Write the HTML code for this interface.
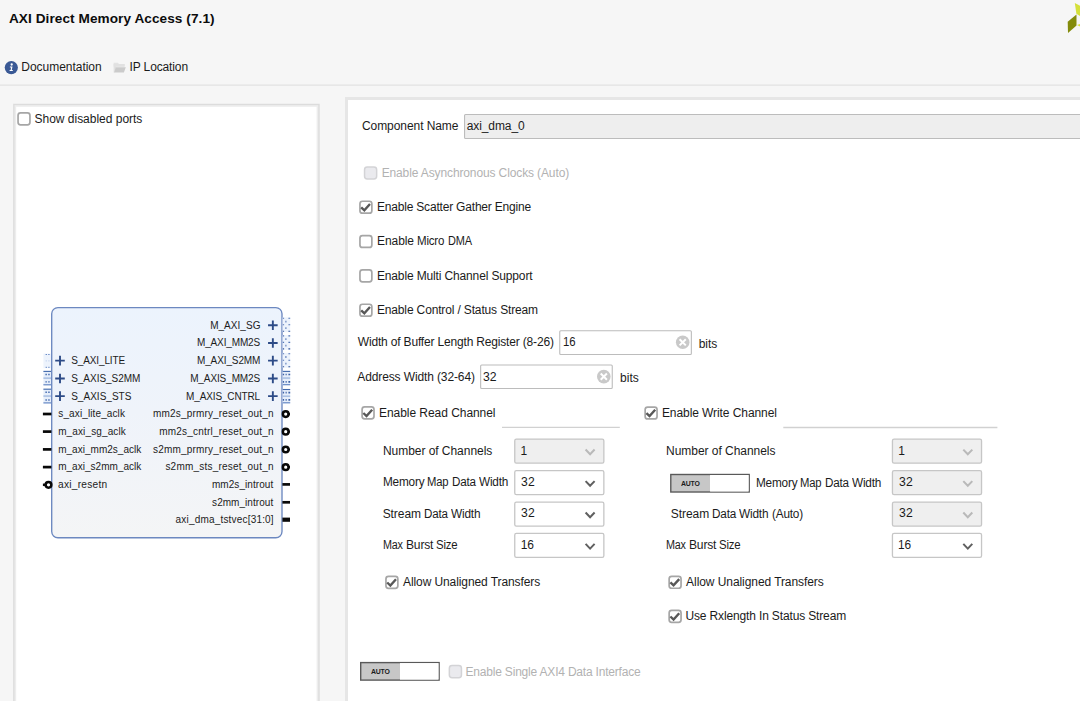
<!DOCTYPE html>
<html>
<head>
<meta charset="utf-8">
<title>AXI Direct Memory Access (7.1)</title>
<style>
html,body{margin:0;padding:0;}
body{width:1080px;height:701px;overflow:hidden;background:#f6f6f6;font-family:"Liberation Sans",sans-serif;font-size:12px;color:#1b1b1b;position:relative;}
.abs{position:absolute;}
.t{position:absolute;white-space:nowrap;transform-origin:0 0;}
.sep{position:absolute;left:0;top:84.6px;width:1080px;height:1.2px;background:#e3e3e3;}
.panel{position:absolute;background:#fff;border:3px solid #e1e1e1;box-sizing:border-box;}
.cb{position:absolute;width:13.2px;height:13.2px;box-sizing:border-box;border:1.6px solid #979797;border-radius:3.4px;background:#fff;}
.cb.dis{border-color:#d2d2d2;background:#ebebee;}
.cb svg{position:absolute;left:-1.5px;top:-1.5px;width:13.2px;height:13.2px;}
.field{position:absolute;box-sizing:border-box;border:1.2px solid #c6c6c6;background:#fff;}
.field.ro{background:#eeeeee;border-color:#c2c2c2;}
.sel{position:absolute;box-sizing:border-box;border:1.3px solid #cdcdcd;border-radius:1.5px;background:#fff;}
.sel.ro{background:#efefef;}
.hl{position:absolute;height:1.2px;background:#d2d2d2;}
.tog{position:absolute;box-sizing:border-box;width:80px;height:19.2px;border:1.4px solid #585858;background:#fff;}
.tog i{position:absolute;left:0;top:0;width:38.4px;height:16.4px;background:#c9c9c9;}
</style>
</head>
<body>
<svg class="abs" style="left:0;top:0;width:1080px;height:701px" viewBox="0 0 1080 701"><path d="M0 85.1H1080" stroke="#e2e2e2" stroke-width="1.3"/><rect x="14.70" y="105.30" width="303.40" height="613.20" fill="#ffffff" stroke="#ededed" stroke-width="3.0"/><rect x="13.85" y="104.45" width="305.10" height="614.90" fill="none" stroke="#dcdcdc" stroke-width="1.3"/><rect x="18.05" y="112.95" width="11.90" height="11.90" rx="2.5" fill="#ffffff" stroke="#a6a6a6" stroke-width="1.7"/><rect x="346.50" y="98.50" width="752.00" height="620.00" fill="#ffffff" stroke="#e6e6e6" stroke-width="3.0"/><rect x="464.55" y="114.55" width="634.90" height="23.95" rx="1.0" fill="#eeeeee" stroke="#bcbcbc" stroke-width="1.1"/><rect x="364.55" y="166.95" width="12.10" height="12.10" rx="2.7" fill="#eaeaee" stroke="#d3d3d6" stroke-width="1.5"/><rect x="359.95" y="201.25" width="11.90" height="11.90" rx="2.5" fill="#ffffff" stroke="#a6a6a6" stroke-width="1.7"/><path d="M361.20 207.30L364.35 210.30L370.00 204.00" fill="none" stroke="#585858" stroke-width="2.4"/><rect x="359.95" y="235.55" width="11.90" height="11.90" rx="2.5" fill="#ffffff" stroke="#a6a6a6" stroke-width="1.7"/><rect x="359.95" y="269.95" width="11.90" height="11.90" rx="2.5" fill="#ffffff" stroke="#a6a6a6" stroke-width="1.7"/><rect x="359.95" y="304.25" width="11.90" height="11.90" rx="2.5" fill="#ffffff" stroke="#a6a6a6" stroke-width="1.7"/><path d="M361.20 310.30L364.35 313.30L370.00 307.00" fill="none" stroke="#585858" stroke-width="2.4"/><rect x="559.75" y="330.75" width="131.60" height="23.70" rx="1.0" fill="#ffffff" stroke="#bcbcbc" stroke-width="1.1"/><circle cx="682.7" cy="342.3" r="6.8" fill="#c9c9c9"/><path d="M679.6 339.2L685.8000000000001 345.40000000000003M685.8000000000001 339.2L679.6 345.40000000000003" stroke="#fff" stroke-width="2"/><rect x="480.65" y="365.05" width="131.60" height="23.40" rx="1.0" fill="#ffffff" stroke="#bcbcbc" stroke-width="1.1"/><circle cx="603.8" cy="376.6" r="6.8" fill="#c9c9c9"/><path d="M600.6999999999999 373.5L606.9 379.70000000000005M606.9 373.5L600.6999999999999 379.70000000000005" stroke="#fff" stroke-width="2"/><rect x="362.10" y="406.95" width="11.90" height="11.90" rx="2.5" fill="#ffffff" stroke="#a6a6a6" stroke-width="1.7"/><path d="M363.35 413.00L366.50 416.00L372.15 409.70" fill="none" stroke="#585858" stroke-width="2.4"/><path d="M502 427.4H619.8" stroke="#d1d1d1" stroke-width="1.3"/><rect x="514.75" y="439.05" width="89.10" height="24.00" rx="1.6" fill="#efefef" stroke="#c6c6c6" stroke-width="1.3"/><path d="M585.60 449.50L590.10 454.20L594.60 449.50" fill="none" stroke="#b9b9b9" stroke-width="2"/><rect x="514.75" y="470.65" width="89.10" height="24.00" rx="1.6" fill="#ffffff" stroke="#c6c6c6" stroke-width="1.3"/><path d="M585.60 481.10L590.10 485.80L594.60 481.10" fill="none" stroke="#606060" stroke-width="2"/><rect x="514.75" y="502.05" width="89.10" height="24.00" rx="1.6" fill="#ffffff" stroke="#c6c6c6" stroke-width="1.3"/><path d="M585.60 512.50L590.10 517.20L594.60 512.50" fill="none" stroke="#606060" stroke-width="2"/><rect x="514.75" y="533.45" width="89.10" height="24.00" rx="1.6" fill="#ffffff" stroke="#c6c6c6" stroke-width="1.3"/><path d="M585.60 543.90L590.10 548.60L594.60 543.90" fill="none" stroke="#606060" stroke-width="2"/><rect x="385.95" y="576.45" width="11.90" height="11.90" rx="2.5" fill="#ffffff" stroke="#a6a6a6" stroke-width="1.7"/><path d="M387.20 582.50L390.35 585.50L396.00 579.20" fill="none" stroke="#585858" stroke-width="2.4"/><rect x="645.15" y="407.05" width="11.90" height="11.90" rx="2.5" fill="#ffffff" stroke="#a6a6a6" stroke-width="1.7"/><path d="M646.40 413.10L649.55 416.10L655.20 409.80" fill="none" stroke="#585858" stroke-width="2.4"/><path d="M783.3 427.5H997.4" stroke="#d1d1d1" stroke-width="1.3"/><rect x="892.45" y="439.15" width="89.10" height="24.00" rx="1.6" fill="#efefef" stroke="#c6c6c6" stroke-width="1.3"/><path d="M963.30 449.60L967.80 454.30L972.30 449.60" fill="none" stroke="#b9b9b9" stroke-width="2"/><rect x="671.10" y="474.80" width="39.00" height="17.00" fill="#c7c7c7"/><rect x="670.80" y="474.50" width="78.40" height="17.50" fill="none" stroke="#595959" stroke-width="1.4"/><rect x="710.10" y="475.00" width="38.50" height="16.50" fill="#ffffff"/><rect x="892.45" y="470.65" width="89.10" height="24.00" rx="1.6" fill="#efefef" stroke="#c6c6c6" stroke-width="1.3"/><path d="M963.30 481.10L967.80 485.80L972.30 481.10" fill="none" stroke="#b9b9b9" stroke-width="2"/><rect x="892.45" y="502.05" width="89.10" height="24.00" rx="1.6" fill="#efefef" stroke="#c6c6c6" stroke-width="1.3"/><path d="M963.30 512.50L967.80 517.20L972.30 512.50" fill="none" stroke="#b9b9b9" stroke-width="2"/><rect x="892.45" y="533.45" width="89.10" height="24.00" rx="1.6" fill="#ffffff" stroke="#c6c6c6" stroke-width="1.3"/><path d="M963.30 543.90L967.80 548.60L972.30 543.90" fill="none" stroke="#606060" stroke-width="2"/><rect x="669.15" y="576.35" width="11.90" height="11.90" rx="2.5" fill="#ffffff" stroke="#a6a6a6" stroke-width="1.7"/><path d="M670.40 582.40L673.55 585.40L679.20 579.10" fill="none" stroke="#585858" stroke-width="2.4"/><rect x="669.15" y="610.45" width="11.90" height="11.90" rx="2.5" fill="#ffffff" stroke="#a6a6a6" stroke-width="1.7"/><path d="M670.40 616.50L673.55 619.50L679.20 613.20" fill="none" stroke="#585858" stroke-width="2.4"/><rect x="361.00" y="662.90" width="39.00" height="17.00" fill="#c7c7c7"/><rect x="360.70" y="662.60" width="78.40" height="17.50" fill="none" stroke="#595959" stroke-width="1.4"/><rect x="400.00" y="663.10" width="38.50" height="16.50" fill="#ffffff"/><rect x="449.35" y="665.55" width="12.10" height="12.10" rx="2.7" fill="#eaeaee" stroke="#d3d3d6" stroke-width="1.5"/></svg>
<div class="t" style="left:8.91px;top:11px;line-height:16px;height:16px;letter-spacing:0.075px;font-size:13.6px;font-weight:bold;color:#0c0c0c;">AXI Direct Memory Access (7.1)</div>
<svg class="abs" style="left:1060px;top:0;width:20px;height:40px" viewBox="0 0 20 40">
<polygon points="7.7,21.8 16.5,14.6 16.5,25.4 8,33.0" fill="#838b0b"/>
<polygon points="14.8,3.1 20,5.7 20,16 16.4,13.8" fill="#d5e03a"/>
<polygon points="17,25 20,23.9 20,26.6" fill="#d5e03a"/></svg>
<svg class="abs" style="left:4px;top:60px;width:15px;height:15px" viewBox="0 0 15 15">
<circle cx="7.3" cy="7.6" r="6.6" fill="#3a5995"/>
<circle cx="7.7" cy="4.5" r="1.15" fill="#fff"/>
<path d="M5.9 6.4h2.6l-0.7 3.6h1v1H5.6v-1h1l0.5-2.6H5.9z" fill="#fff"/></svg>
<div class="t" style="left:21.34px;top:60px;line-height:14px;height:14px;letter-spacing:-0.031px;">Documentation</div>
<svg class="abs" style="left:112px;top:61px;width:16px;height:13px" viewBox="0 0 16 13">
<path d="M1.6 1.7h4.4l0.9 1.2h5.7v2.6H1.6z" fill="#e3e3e3"/>
<path d="M1.6 3v8.4h1.2l1.3-5.6h8.5V3z" fill="#e1e1e1"/>
<path d="M3.7 6.2h10.1l-1.9 5.3H2.2z" fill="#cbcbcb"/></svg>
<div class="t" style="left:129.51px;top:60px;line-height:14px;height:14px;letter-spacing:-0.124px;">IP Location</div>
<div class="t" style="left:34.54px;top:112px;line-height:14px;height:14px;letter-spacing:-0.013px;">Show disabled ports</div>
<svg class="abs" style="left:0;top:0;width:340px;height:701px" viewBox="0 0 340 701"><defs><linearGradient id="bg1" x1="0" y1="0" x2="0" y2="1"><stop offset="0" stop-color="#ecf3fd"/><stop offset="0.45" stop-color="#eff3fa"/><stop offset="1" stop-color="#f4f5f6"/></linearGradient></defs><rect x="51.7" y="307.55" width="230.3" height="230.2" rx="6.2" ry="6.2" fill="url(#bg1)" stroke="#6c88c0" stroke-width="1.35"/><rect x="43.4" y="353.6" width="7.6" height="14.599999999999966" fill="#edf3fc"/><path d="M45.6 354.5h1.4M48.199999999999996 354.5h1.4" stroke="#6a8bc6" stroke-width="1"/><path d="M45.6 360.9h1.4M48.199999999999996 360.9h1.4" stroke="#c3d3ee" stroke-width="1"/><path d="M45.6 367.29999999999995h1.4M48.199999999999996 367.29999999999995h1.4" stroke="#6a8bc6" stroke-width="1"/><rect x="43.4" y="370.9" width="7.6" height="14.400000000000034" fill="#e6eefa"/><path d="M43.4 371.4h7.6" stroke="#4168ab" stroke-width="1.1"/><path d="M43.4 378.1h7.6" stroke="#8fabd9" stroke-width="1.1"/><path d="M43.4 384.8h7.6" stroke="#5c80c0" stroke-width="1.1"/><path d="M45.4 374.5h1.5M48.199999999999996 374.5h1.5" stroke="#4a6fb2" stroke-width="1.4"/><path d="M45.4 381.90000000000003h1.5M48.199999999999996 381.90000000000003h1.5" stroke="#4a6fb2" stroke-width="1.4"/><rect x="43.4" y="388.7" width="7.6" height="14.699999999999989" fill="#e6eefa"/><path d="M43.4 389.2h7.6" stroke="#4168ab" stroke-width="1.1"/><path d="M43.4 396.04999999999995h7.6" stroke="#8fabd9" stroke-width="1.1"/><path d="M43.4 402.9h7.6" stroke="#5c80c0" stroke-width="1.1"/><path d="M45.4 392.3h1.5M48.199999999999996 392.3h1.5" stroke="#4a6fb2" stroke-width="1.4"/><path d="M45.4 400.0h1.5M48.199999999999996 400.0h1.5" stroke="#4a6fb2" stroke-width="1.4"/><rect x="282.6" y="317.4" width="7.6" height="14.800000000000011" fill="#edf3fc"/><path d="M282.8 318.29999999999995h1.3M288.40000000000003 318.29999999999995h1.8" stroke="#5577b6" stroke-width="1.1"/><path d="M285.90000000000003 320.65v1.8" stroke="#5b7cba" stroke-width="1.1"/><path d="M282.8 324.79999999999995h1.3M288.40000000000003 324.79999999999995h1.8" stroke="#5577b6" stroke-width="1.1"/><path d="M285.90000000000003 327.15v1.8" stroke="#5b7cba" stroke-width="1.1"/><path d="M282.8 331.29999999999995h1.3M288.40000000000003 331.29999999999995h1.8" stroke="#34589d" stroke-width="1.1"/><rect x="282.6" y="335.0" width="7.6" height="14.800000000000011" fill="#edf3fc"/><path d="M282.8 335.9h1.3M288.40000000000003 335.9h1.8" stroke="#5577b6" stroke-width="1.1"/><path d="M285.90000000000003 338.25v1.8" stroke="#5b7cba" stroke-width="1.1"/><path d="M282.8 342.4h1.3M288.40000000000003 342.4h1.8" stroke="#5577b6" stroke-width="1.1"/><path d="M285.90000000000003 344.75v1.8" stroke="#5b7cba" stroke-width="1.1"/><path d="M282.8 348.9h1.3M288.40000000000003 348.9h1.8" stroke="#34589d" stroke-width="1.1"/><rect x="282.6" y="352.8" width="7.6" height="14.899999999999977" fill="#edf3fc"/><path d="M282.8 353.7h1.3M288.40000000000003 353.7h1.8" stroke="#5577b6" stroke-width="1.1"/><path d="M285.90000000000003 356.075v1.8" stroke="#5b7cba" stroke-width="1.1"/><path d="M282.8 360.25h1.3M288.40000000000003 360.25h1.8" stroke="#5577b6" stroke-width="1.1"/><path d="M285.90000000000003 362.625v1.8" stroke="#5b7cba" stroke-width="1.1"/><path d="M282.8 366.79999999999995h1.3M288.40000000000003 366.79999999999995h1.8" stroke="#34589d" stroke-width="1.1"/><rect x="282.6" y="370.9" width="7.6" height="14.300000000000011" fill="#e6eefa"/><path d="M282.6 371.4h7.6" stroke="#4168ab" stroke-width="1.1"/><path d="M282.6 378.04999999999995h7.6" stroke="#8fabd9" stroke-width="1.1"/><path d="M282.6 384.7h7.6" stroke="#5c80c0" stroke-width="1.1"/><path d="M282.8 374.5h1.3M285.6 374.5h1.1M288.40000000000003 374.5h1.8" stroke="#3c62a6" stroke-width="1.7"/><path d="M282.8 381.8h1.3M285.6 381.8h1.1M288.40000000000003 381.8h1.8" stroke="#3c62a6" stroke-width="1.7"/><rect x="282.6" y="389.0" width="7.6" height="14.300000000000011" fill="#e6eefa"/><path d="M282.6 389.5h7.6" stroke="#4168ab" stroke-width="1.1"/><path d="M282.6 396.15h7.6" stroke="#8fabd9" stroke-width="1.1"/><path d="M282.6 402.8h7.6" stroke="#5c80c0" stroke-width="1.1"/><path d="M282.8 392.6h1.3M285.6 392.6h1.1M288.40000000000003 392.6h1.8" stroke="#3c62a6" stroke-width="1.7"/><path d="M282.8 399.90000000000003h1.3M285.6 399.90000000000003h1.1M288.40000000000003 399.90000000000003h1.8" stroke="#3c62a6" stroke-width="1.7"/><path d="M55.2 360.6H64.8M60 355.8V365.40000000000003" stroke="#2d4b87" stroke-width="1.9" fill="none"/><path d="M55.2 378.5H64.8M60 373.7V383.3" stroke="#2d4b87" stroke-width="1.9" fill="none"/><path d="M55.2 396.1H64.8M60 391.3V400.90000000000003" stroke="#2d4b87" stroke-width="1.9" fill="none"/><path d="M268.05 325.25H277.65000000000003M272.85 320.45V330.05" stroke="#2d4b87" stroke-width="1.9" fill="none"/><path d="M268.05 343.0H277.65000000000003M272.85 338.2V347.8" stroke="#2d4b87" stroke-width="1.9" fill="none"/><path d="M268.05 360.6H277.65000000000003M272.85 355.8V365.40000000000003" stroke="#2d4b87" stroke-width="1.9" fill="none"/><path d="M268.05 378.5H277.65000000000003M272.85 373.7V383.3" stroke="#2d4b87" stroke-width="1.9" fill="none"/><path d="M268.05 396.15H277.65000000000003M272.85 391.34999999999997V400.95" stroke="#2d4b87" stroke-width="1.9" fill="none"/><path d="M42.9 414H51.4" stroke="#080808" stroke-width="2.7"/><path d="M42.9 431.6H51.4" stroke="#080808" stroke-width="2.7"/><path d="M42.9 449.4H51.4" stroke="#080808" stroke-width="2.7"/><path d="M42.9 467.1H51.4" stroke="#080808" stroke-width="2.7"/><path d="M42.9 484.8H45" stroke="#0a0a0a" stroke-width="2.5"/><circle cx="48.5" cy="484.8" r="2.85" fill="#fff" stroke="#080808" stroke-width="2.5"/><circle cx="285.7" cy="414.1" r="2.85" fill="#fff" stroke="#080808" stroke-width="2.5"/><path d="M288.6 414.1H290" stroke="#080808" stroke-width="2.2"/><circle cx="285.7" cy="431.7" r="2.85" fill="#fff" stroke="#080808" stroke-width="2.5"/><path d="M288.6 431.7H290" stroke="#080808" stroke-width="2.2"/><circle cx="285.7" cy="449.5" r="2.85" fill="#fff" stroke="#080808" stroke-width="2.5"/><path d="M288.6 449.5H290" stroke="#080808" stroke-width="2.2"/><circle cx="285.7" cy="467.2" r="2.85" fill="#fff" stroke="#080808" stroke-width="2.5"/><path d="M288.6 467.2H290" stroke="#080808" stroke-width="2.2"/><path d="M282.4 484.4H290" stroke="#0a0a0a" stroke-width="2.7"/><path d="M282.4 502.3H290" stroke="#0a0a0a" stroke-width="2.7"/><path d="M282.4 519.7H290" stroke="#0a0a0a" stroke-width="4.2"/></svg>
<div class="t" style="left:71.18px;top:355px;line-height:12px;height:12px;letter-spacing:-0.111px;font-size:10px;color:#1c1c1c;">S_AXI_LITE</div>
<div class="t" style="left:71.18px;top:373px;line-height:12px;height:12px;letter-spacing:-0.022px;font-size:10px;color:#1c1c1c;">S_AXIS_S2MM</div>
<div class="t" style="left:71.18px;top:391px;line-height:12px;height:12px;letter-spacing:0.024px;font-size:10px;color:#1c1c1c;">S_AXIS_STS</div>
<div class="t" style="left:58.30px;top:408px;line-height:12px;height:12px;letter-spacing:0.114px;font-size:10px;color:#1c1c1c;">s_axi_lite_aclk</div>
<div class="t" style="left:58.17px;top:426px;line-height:12px;height:12px;letter-spacing:0.127px;font-size:10px;color:#1c1c1c;">m_axi_sg_aclk</div>
<div class="t" style="left:58.17px;top:444px;line-height:12px;height:12px;letter-spacing:0.023px;font-size:10px;color:#1c1c1c;">m_axi_mm2s_aclk</div>
<div class="t" style="left:58.17px;top:461px;line-height:12px;height:12px;letter-spacing:0.023px;font-size:10px;color:#1c1c1c;">m_axi_s2mm_aclk</div>
<div class="t" style="left:58.37px;top:479px;line-height:12px;height:12px;letter-spacing:0.250px;font-size:10px;color:#1c1c1c;transform:scaleX(1.0162);">axi_resetn</div>
<div class="t" style="left:210.15px;top:320px;line-height:12px;height:12px;letter-spacing:0.040px;font-size:10px;color:#1c1c1c;">M_AXI_SG</div>
<div class="t" style="left:196.95px;top:337px;line-height:12px;height:12px;letter-spacing:-0.136px;font-size:10px;color:#1c1c1c;">M_AXI_MM2S</div>
<div class="t" style="left:196.95px;top:355px;line-height:12px;height:12px;letter-spacing:-0.110px;font-size:10px;color:#1c1c1c;">M_AXI_S2MM</div>
<div class="t" style="left:190.15px;top:373px;line-height:12px;height:12px;letter-spacing:-0.108px;font-size:10px;color:#1c1c1c;">M_AXIS_MM2S</div>
<div class="t" style="left:186.05px;top:391px;line-height:12px;height:12px;letter-spacing:-0.132px;font-size:10px;color:#1c1c1c;">M_AXIS_CNTRL</div>
<div class="t" style="left:152.97px;top:408px;line-height:12px;height:12px;letter-spacing:0.181px;font-size:10px;color:#1c1c1c;">mm2s_prmry_reset_out_n</div>
<div class="t" style="left:159.27px;top:426px;line-height:12px;height:12px;letter-spacing:0.203px;font-size:10px;color:#1c1c1c;">mm2s_cntrl_reset_out_n</div>
<div class="t" style="left:153.10px;top:444px;line-height:12px;height:12px;letter-spacing:0.174px;font-size:10px;color:#1c1c1c;">s2mm_prmry_reset_out_n</div>
<div class="t" style="left:165.40px;top:461px;line-height:12px;height:12px;letter-spacing:0.218px;font-size:10px;color:#1c1c1c;">s2mm_sts_reset_out_n</div>
<div class="t" style="left:211.97px;top:479px;line-height:12px;height:12px;letter-spacing:0.058px;font-size:10px;color:#1c1c1c;">mm2s_introut</div>
<div class="t" style="left:212.10px;top:497px;line-height:12px;height:12px;letter-spacing:0.046px;font-size:10px;color:#1c1c1c;">s2mm_introut</div>
<div class="t" style="left:175.58px;top:514px;line-height:12px;height:12px;letter-spacing:0.188px;font-size:10px;color:#1c1c1c;">axi_dma_tstvec[31:0]</div>
<div class="t" style="left:362.01px;top:119px;line-height:14px;height:14px;letter-spacing:-0.072px;">Component Name</div>
<div class="t" style="left:466.69px;top:119px;line-height:14px;height:14px;letter-spacing:-0.093px;">axi_dma_0</div>
<div class="t" style="left:381.64px;top:166px;line-height:14px;height:14px;letter-spacing:-0.121px;color:#b2b2b2;">Enable Asynchronous Clocks (Auto)</div>
<div class="t" style="left:376.94px;top:200px;line-height:14px;height:14px;letter-spacing:-0.191px;">Enable Scatter Gather Engine</div>
<div class="t" style="left:376.94px;top:234px;line-height:14px;height:14px;letter-spacing:-0.052px;">Enable</div><div class="t" style="left:417.47px;top:234px;line-height:14px;height:14px;letter-spacing:-0.200px;transform:scaleX(0.9605);">Micro</div><div class="t" style="left:447.61px;top:234px;line-height:14px;height:14px;letter-spacing:-0.200px;transform:scaleX(0.9137);">DMA</div>
<div class="t" style="left:376.94px;top:269px;line-height:14px;height:14px;letter-spacing:-0.140px;">Enable Multi Channel Support</div>
<div class="t" style="left:376.94px;top:303px;line-height:14px;height:14px;letter-spacing:-0.147px;">Enable Control / Status Stream</div>
<div class="t" style="left:357.77px;top:335px;line-height:14px;height:14px;letter-spacing:-0.173px;">Width of Buffer Length Register (8-26)</div>
<div class="t" style="left:562.73px;top:335px;line-height:14px;height:14px;letter-spacing:-0.200px;transform:scaleX(0.9462);">16</div>
<div class="t" style="left:698.68px;top:337px;line-height:14px;height:14px;letter-spacing:0.000px;">bits</div>
<div class="t" style="left:357.32px;top:370px;line-height:14px;height:14px;letter-spacing:-0.121px;">Address Width (32-64)</div>
<div class="t" style="left:482.97px;top:370px;line-height:14px;height:14px;letter-spacing:-0.105px;transform:scaleX(1.0196);">32</div>
<div class="t" style="left:620.08px;top:371px;line-height:14px;height:14px;letter-spacing:0.000px;">bits</div>
<div class="t" style="left:379.04px;top:406px;line-height:14px;height:14px;letter-spacing:-0.051px;">Enable Read Channel</div>
<div class="t" style="left:382.94px;top:444px;line-height:14px;height:14px;letter-spacing:-0.043px;">Number of Channels</div>
<div class="t" style="left:520.48px;top:444px;line-height:14px;height:14px;letter-spacing:0.000px;">1</div>
<div class="t" style="left:382.55px;top:475px;line-height:14px;height:14px;letter-spacing:-0.200px;transform:scaleX(0.9807);">Memory</div><div class="t" style="left:426.69px;top:475px;line-height:14px;height:14px;letter-spacing:-0.200px;transform:scaleX(0.9395);">Map</div><div class="t" style="left:451.56px;top:475px;line-height:14px;height:14px;letter-spacing:-0.200px;transform:scaleX(0.9714);">Data</div><div class="t" style="left:479.27px;top:475px;line-height:14px;height:14px;letter-spacing:-0.200px;transform:scaleX(0.9827);">Width</div>
<div class="t" style="left:520.87px;top:475px;line-height:14px;height:14px;letter-spacing:0.250px;transform:scaleX(1.0124);">32</div>
<div class="t" style="left:382.64px;top:507px;line-height:14px;height:14px;letter-spacing:-0.045px;">Stream</div><div class="t" style="left:424.07px;top:507px;line-height:14px;height:14px;letter-spacing:-0.200px;transform:scaleX(0.9672);">Data</div><div class="t" style="left:451.37px;top:507px;line-height:14px;height:14px;letter-spacing:-0.200px;transform:scaleX(0.9861);">Width</div>
<div class="t" style="left:520.87px;top:506px;line-height:14px;height:14px;letter-spacing:0.250px;transform:scaleX(1.0124);">32</div>
<div class="t" style="left:382.73px;top:538px;line-height:14px;height:14px;letter-spacing:-0.200px;transform:scaleX(0.8983);">Max</div><div class="t" style="left:406.03px;top:538px;line-height:14px;height:14px;letter-spacing:-0.177px;transform:scaleX(1.0047);">Burst</div><div class="t" style="left:436.18px;top:538px;line-height:14px;height:14px;letter-spacing:-0.200px;transform:scaleX(0.9516);">Size</div>
<div class="t" style="left:520.68px;top:538px;line-height:14px;height:14px;letter-spacing:-0.200px;">16</div>
<div class="t" style="left:403.02px;top:575px;line-height:14px;height:14px;letter-spacing:-0.093px;">Allow Unaligned Transfers</div>
<div class="t" style="left:661.94px;top:406px;line-height:14px;height:14px;letter-spacing:-0.080px;">Enable Write Channel</div>
<div class="t" style="left:666.04px;top:444px;line-height:14px;height:14px;letter-spacing:-0.037px;">Number of Channels</div>
<div class="t" style="left:898.18px;top:444px;line-height:14px;height:14px;letter-spacing:0.000px;">1</div>
<div class="t" style="left:680.61px;top:479px;line-height:9px;height:9px;letter-spacing:-0.200px;font-size:7px;font-weight:bold;color:#1c1c1c;transform:scaleX(0.9869);">AUTO</div>
<div class="t" style="left:755.55px;top:476px;line-height:14px;height:14px;letter-spacing:-0.200px;transform:scaleX(0.9807);">Memory</div><div class="t" style="left:799.69px;top:476px;line-height:14px;height:14px;letter-spacing:-0.200px;transform:scaleX(0.9395);">Map</div><div class="t" style="left:824.56px;top:476px;line-height:14px;height:14px;letter-spacing:-0.200px;transform:scaleX(0.9714);">Data</div><div class="t" style="left:852.27px;top:476px;line-height:14px;height:14px;letter-spacing:-0.200px;transform:scaleX(0.9827);">Width</div>
<div class="t" style="left:898.57px;top:475px;line-height:14px;height:14px;letter-spacing:0.195px;transform:scaleX(1.0156);">32</div>
<div class="t" style="left:670.74px;top:507px;line-height:14px;height:14px;letter-spacing:-0.045px;">Stream</div><div class="t" style="left:711.86px;top:507px;line-height:14px;height:14px;letter-spacing:-0.200px;transform:scaleX(0.9798);">Data</div><div class="t" style="left:739.37px;top:507px;line-height:14px;height:14px;letter-spacing:-0.200px;transform:scaleX(0.9861);">Width</div><div class="t" style="left:771.59px;top:507px;line-height:14px;height:14px;letter-spacing:-0.200px;transform:scaleX(0.9816);">(Auto)</div>
<div class="t" style="left:898.57px;top:506px;line-height:14px;height:14px;letter-spacing:0.195px;transform:scaleX(1.0156);">32</div>
<div class="t" style="left:666.03px;top:538px;line-height:14px;height:14px;letter-spacing:-0.200px;transform:scaleX(0.8983);">Max</div><div class="t" style="left:689.33px;top:538px;line-height:14px;height:14px;letter-spacing:-0.177px;transform:scaleX(1.0047);">Burst</div><div class="t" style="left:719.48px;top:538px;line-height:14px;height:14px;letter-spacing:-0.200px;transform:scaleX(0.9516);">Size</div>
<div class="t" style="left:898.39px;top:538px;line-height:14px;height:14px;letter-spacing:-0.200px;transform:scaleX(0.9880);">16</div>
<div class="t" style="left:686.12px;top:575px;line-height:14px;height:14px;letter-spacing:-0.072px;">Allow Unaligned Transfers</div>
<div class="t" style="left:685.48px;top:609px;line-height:14px;height:14px;letter-spacing:-0.145px;">Use Rxlength In Status Stream</div>
<div class="t" style="left:370.51px;top:667px;line-height:9px;height:9px;letter-spacing:-0.200px;font-size:7px;font-weight:bold;color:#1c1c1c;transform:scaleX(0.9869);">AUTO</div>
<div class="t" style="left:465.54px;top:665px;line-height:14px;height:14px;letter-spacing:-0.196px;color:#b2b2b2;">Enable Single AXI4 Data Interface</div>
</body>
</html>
